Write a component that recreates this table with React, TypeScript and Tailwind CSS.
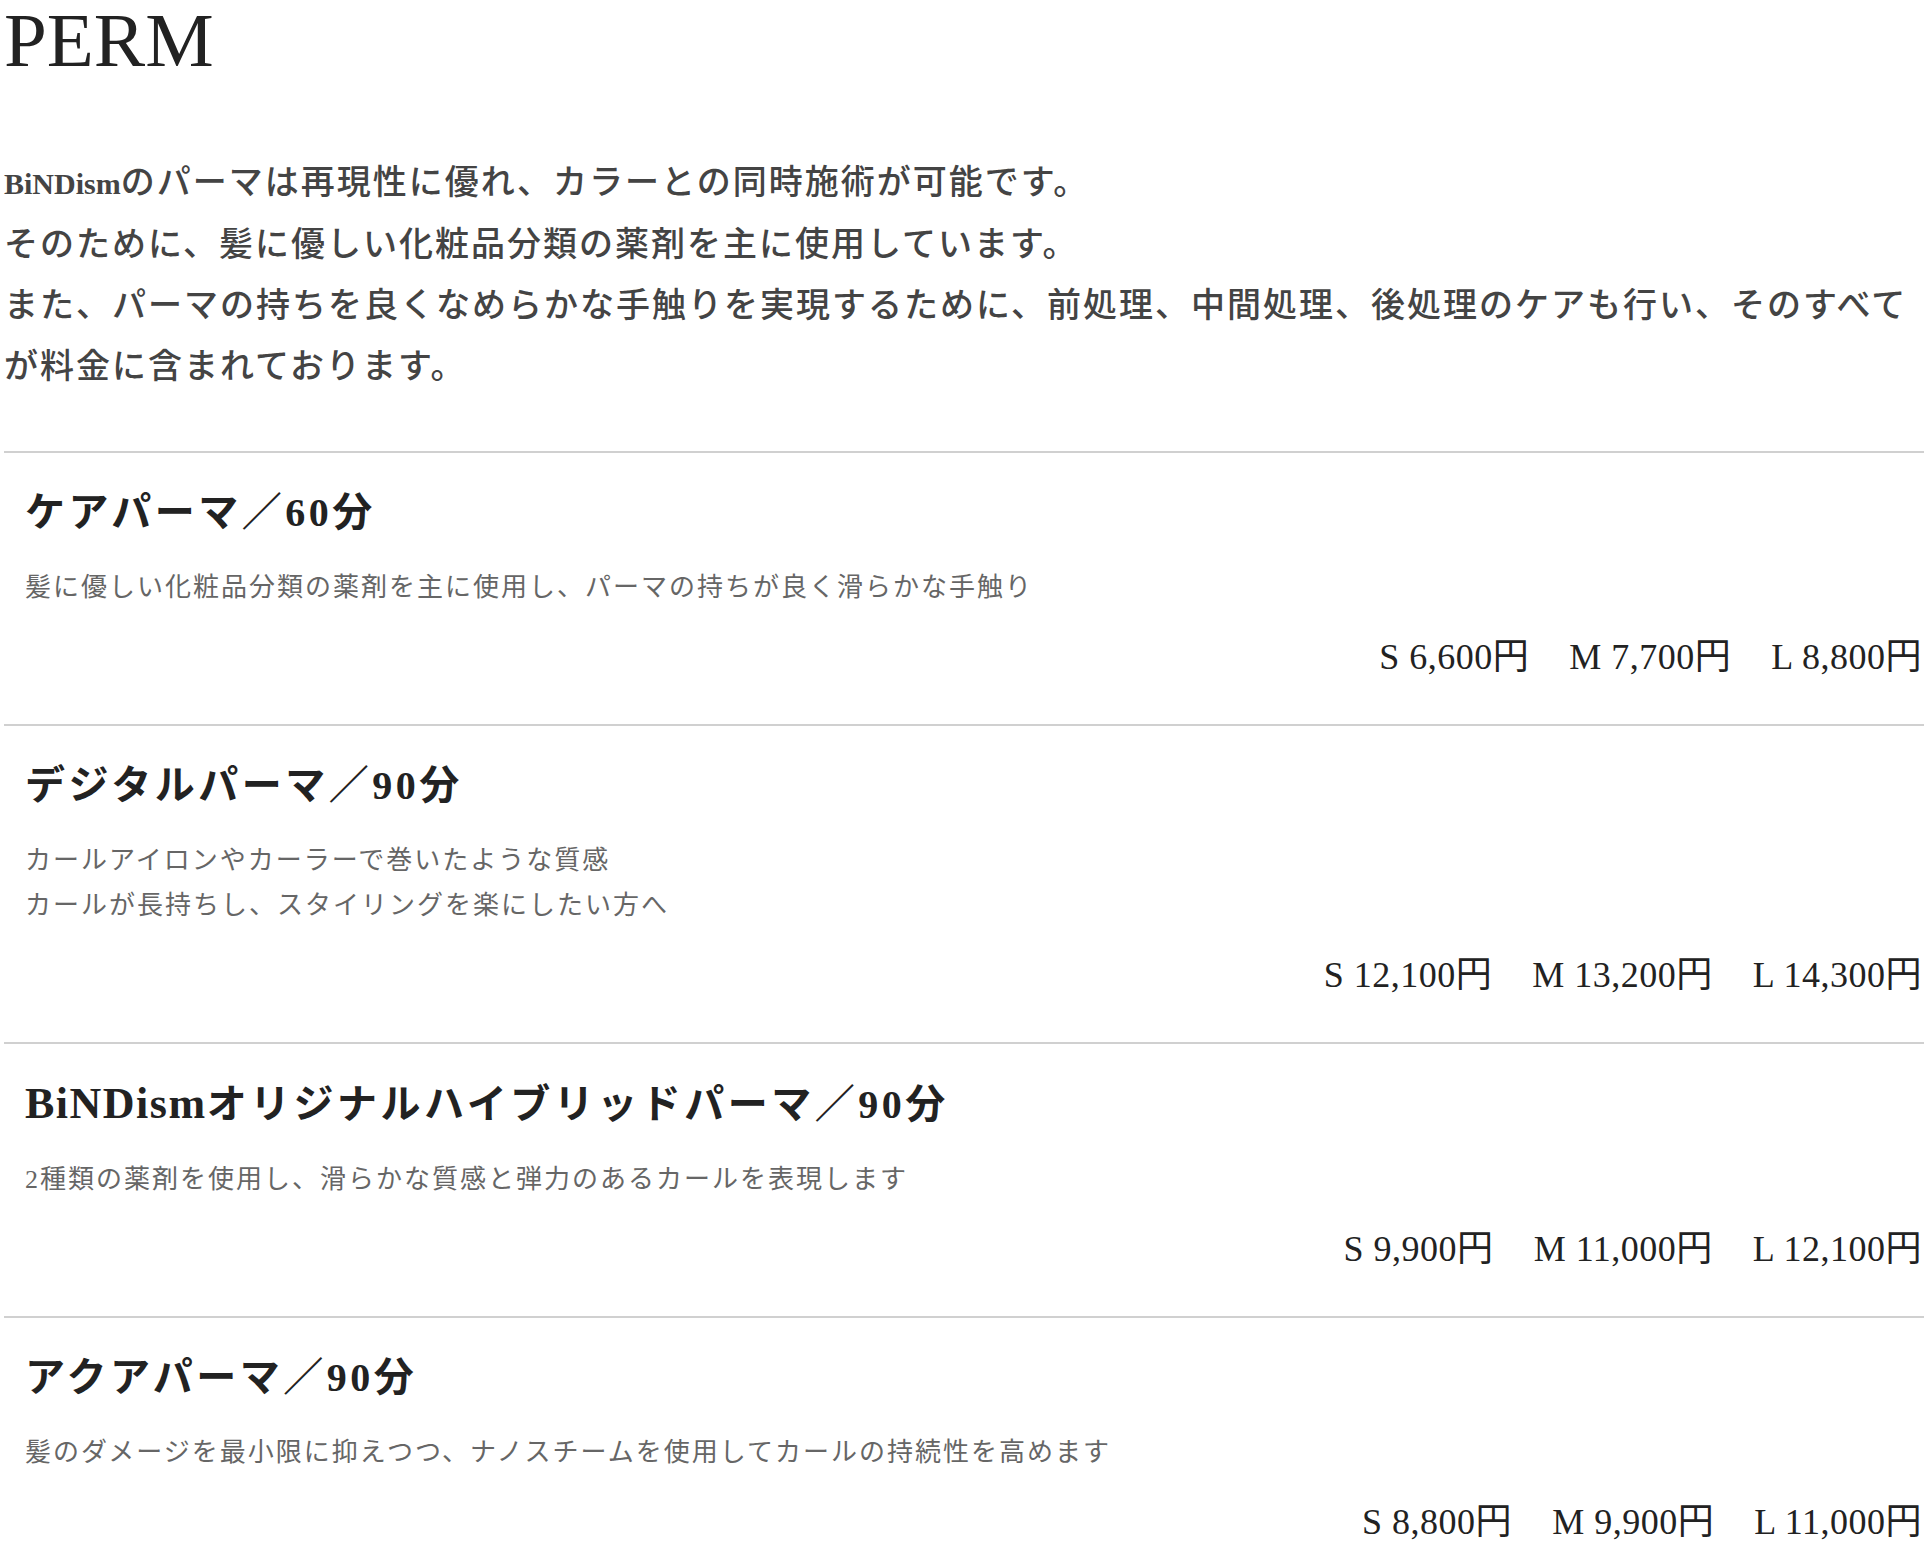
import React from "react";

type Menu = {
  name: React.ReactNode;
  desc: string[];
  prices: { size: string; price: string }[];
};

const menus: Menu[] = [
  {
    name: "ケアパーマ／60分",
    desc: ["髪に優しい化粧品分類の薬剤を主に使用し、パーマの持ちが良く滑らかな手触り"],
    prices: [
      { size: "S", price: "6,600" },
      { size: "M", price: "7,700" },
      { size: "L", price: "8,800" },
    ],
  },
  {
    name: "デジタルパーマ／90分",
    desc: [
      "カールアイロンやカーラーで巻いたような質感",
      "カールが長持ちし、スタイリングを楽にしたい方へ",
    ],
    prices: [
      { size: "S", price: "12,100" },
      { size: "M", price: "13,200" },
      { size: "L", price: "14,300" },
    ],
  },
  {
    name: (
      <>
        <span className="text-[44px] tracking-[1.5px]">BiNDism</span>
        オリジナルハイブリッドパーマ／90分
      </>
    ),
    desc: ["2種類の薬剤を使用し、滑らかな質感と弾力のあるカールを表現します"],
    prices: [
      { size: "S", price: "9,900" },
      { size: "M", price: "11,000" },
      { size: "L", price: "12,100" },
    ],
  },
  {
    name: "アクアパーマ／90分",
    desc: ["髪のダメージを最小限に抑えつつ、ナノスチームを使用してカールの持続性を高めます"],
    prices: [
      { size: "S", price: "8,800" },
      { size: "M", price: "9,900" },
      { size: "L", price: "11,000" },
    ],
  },
];

function MenuItem({ menu }: { menu: Menu }) {
  return (
    <div className="border-t-2 border-[#d0d0d0] pl-[21px] pr-[2px] pt-[30px] pb-[40px]">
      {/* メニュー名 */}
      <h3 className="text-[40px] leading-[60px] font-bold tracking-[3.5px] text-[#222]">
        {menu.name}
      </h3>

      {/* 説明 */}
      <p className="mt-[22px] text-[26px] leading-[45px] tracking-[2px] text-[#666]">
        {menu.desc.map((line, i) => (
          <React.Fragment key={i}>
            {i > 0 && <br />}
            {line}
          </React.Fragment>
        ))}
      </p>

      {/* 料金 */}
      <div className="mt-[20px] flex justify-end gap-[40px] text-[36px] leading-[54px] tracking-[0.5px] text-[#222]">
        {menu.prices.map((p) => (
          <span key={p.size}>
            {p.size} {p.price}円
          </span>
        ))}
      </div>
    </div>
  );
}

export default function App() {
  return (
    <div className="min-h-screen bg-white font-['Liberation_Serif','Noto_Sans_CJK_JP',serif]">
      <div className="ml-[4px] w-[1920px]">
        <h1 className="text-[77px] leading-[80px] text-[#222]">PERM</h1>

        <p className="mt-[72px] text-[34px] leading-[61px] tracking-[2px] font-medium text-[#444]">
          <span className="text-[30px] font-bold tracking-normal">BiNDism</span>
          のパーマは再現性に優れ、カラーとの同時施術が可能です。
          <br />
          そのために、髪に優しい化粧品分類の薬剤を主に使用しています。
          <br />
          また、パーマの持ちを良くなめらかな手触りを実現するために、前処理、中間処理、後処理のケアも行い、そのすべてが料金に含まれております。
        </p>

        <div className="mt-[54px]">
          {menus.map((m, i) => (
            <MenuItem key={i} menu={m} />
          ))}
        </div>
      </div>
    </div>
  );
}
